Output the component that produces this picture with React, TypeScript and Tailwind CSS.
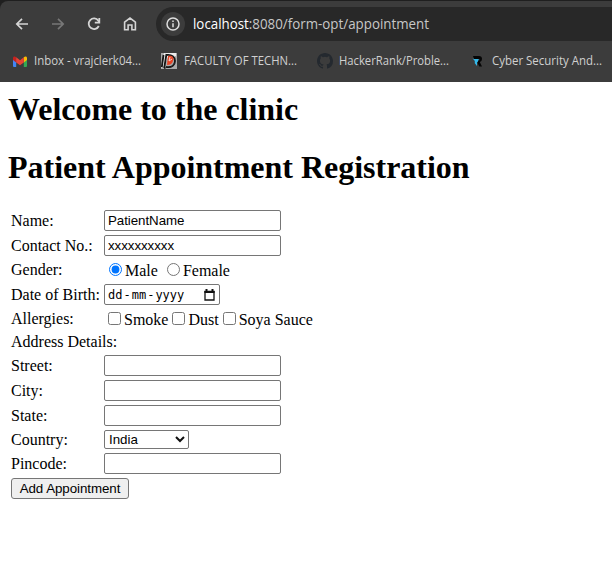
import type { ReactNode } from "react";

const inputClass =
  "block h-[21px] w-[177px] rounded-[2px] border border-[#767676] bg-white px-[3px] font-['Liberation_Sans',Arial,sans-serif] text-[13.333px] leading-[15px] tracking-[-0.06px] text-black outline-none";

function Row({ label, height, children }: { label: string; height: string; children?: ReactNode }) {
  return (
    <div className={`flex items-center ${height}`}>
      <div className="w-[93px] shrink-0 whitespace-nowrap leading-[18px]">{label}</div>
      {children}
    </div>
  );
}

function Choice({ type, label, checked }: { type: "radio" | "checkbox"; label: string; checked?: boolean }) {
  return (
    <label className="flex items-start whitespace-nowrap leading-[18px]">
      <input
        type={type}
        name={type === "radio" ? "gender" : label}
        defaultChecked={checked}
        className="mt-[2px] mr-[3px] ml-1 block size-[13px] shrink-0"
      />
      <span className="pt-px">{label}</span>
    </label>
  );
}

function Bookmark({ icon, text, left, width, gap }: { icon: ReactNode; text: string; left: string; width: number; gap: string }) {
  return (
    <div className={`flex h-[18px] items-center ${left} ${gap}`}>
      {icon}
      <svg width={width} height="18" className="block shrink-0 overflow-visible">
        <text x="0" y="13" textLength={width} lengthAdjust="spacingAndGlyphs" fill="#d0d0d0" fontSize="12">
          {text}
        </text>
      </svg>
    </div>
  );
}

function Toolbar() {
  return (
    <header className="h-[82px] overflow-hidden bg-[#1f1f1f] font-['Open_Sans','Noto_Sans',sans-serif]">
      <div className="mt-px h-[81px] rounded-tl-[8px] bg-[#3c3c3c]">
        <div className="flex h-[46px] items-center pl-[14px]">
          <svg width="16" height="16" viewBox="0 0 16 16" fill="none" stroke="#d5d5d5" strokeWidth="1.7">
            <path d="M14 8H3M8 2.8 2.8 8 8 13.2" />
          </svg>
          <svg className="ml-5" width="16" height="16" viewBox="0 0 16 16" fill="none" stroke="#777777" strokeWidth="1.7">
            <path d="M2 8h11M8 2.8 13.2 8 8 13.2" />
          </svg>
          <svg className="ml-5" width="16" height="16" viewBox="0 0 16 16" fill="none" stroke="#d5d5d5" strokeWidth="1.8">
            <path d="M12.8 10A5.3 5.3 0 1 1 12.3 4.6L13.4 6" />
            <path d="M13.3 2v4.6H8.8" />
          </svg>
          <svg className="ml-5" width="16" height="16" viewBox="0 0 16 16" fill="none" stroke="#d5d5d5" strokeWidth="1.6">
            <path d="M2.6 6.2 8 2l5.4 4.2v7.5H9.9V9H6.1v4.7H2.6Z" />
          </svg>
          <div className="ml-[18px] flex h-[34px] flex-1 items-center rounded-l-full bg-[#282828] pl-[5px]">
            <div className="flex size-6 items-center justify-center rounded-full bg-[#3c3c3c]">
              <svg width="14" height="14" viewBox="0 0 14 14" fill="none" stroke="#dedede" strokeWidth="1.5">
                <circle cx="7" cy="7" r="6" />
                <path d="M7 6.2v4M7 3.5v1.5" />
              </svg>
            </div>
            <svg width="236" height="20" className="ml-2 block overflow-visible">
              <text x="0" y="15" textLength="236" lengthAdjust="spacingAndGlyphs" fontSize="14" fill="#c7c7c7">
                <tspan fill="#ffffff">localhost</tspan>:8080/form-opt/appointment
              </text>
            </svg>
          </div>
        </div>
        <nav className="flex h-[28px] items-center">
          <Bookmark
            left="ml-[13px]"
            gap="gap-[7px]"
            width={107}
            text="Inbox - vrajclerk04..."
            icon={
              <svg width="14" height="11" viewBox="0 0 14 11" className="shrink-0">
                <path fill="#4285f4" d="M0 3h3.2v8H1a1 1 0 0 1-1-1Z" />
                <path fill="#34a853" d="M10.8 3H14v7a1 1 0 0 1-1 1h-2.2Z" />
                <path fill="#fbbc04" d="M10.8 1.2C12.3-.2 14 .3 14 2v2l-3.2 2.4Z" />
                <path fill="#c5221f" d="M0 2C0 .3 1.7-.2 3.2 1.2v5.2L0 4Z" />
                <path fill="#ea4335" d="m3.2 1.2 3.8 3 3.8-3v5.2L7 9.2 3.2 6.4Z" />
              </svg>
            }
          />
          <Bookmark
            left="ml-5"
            gap="gap-[7px]"
            width={113}
            text="FACULTY OF TECHN..."
            icon={
              <svg width="16" height="16" viewBox="0 0 16 16" className="shrink-0">
                <path fill="#aaaaaa" d="M0 0h16v16H0Z" />
                <path fill="#eeeeee" d="M3 0h12v3l-3 1-4-2-5 11-3 2Z" />
                <path stroke="#151515" strokeWidth="1.8" fill="none" d="M.8 14 2.5 2M3.2 15 5.5 1M5 14c6 1 9-2 9-6S11 1 5 2" />
                <path fill="#e54426" d="M7 3c5-1 6 2 5 5-1 3-3 4-6 4Z" />
                <path stroke="#f7d2c9" fill="none" d="m9 4-1 4 3-2" />
                <path stroke="#222222" d="m10 14 4-4M3 16l3-2" />
              </svg>
            }
          />
          <Bookmark
            left="ml-5"
            gap="gap-[6px]"
            width={110}
            text="HackerRank/Proble..."
            icon={
              <svg width="16" height="16" viewBox="0 0 16 16" fill="#24292f" className="shrink-0">
                <path d="M8 0C3.58 0 0 3.58 0 8c0 3.54 2.29 6.53 5.47 7.59.4.07.55-.17.55-.38 0-.19-.01-.82-.01-1.49-2.01.37-2.53-.49-2.69-.94-.09-.23-.48-.94-.82-1.13-.28-.15-.68-.52-.01-.53.63-.01 1.08.58 1.23.82.72 1.21 1.87.87 2.33.66.07-.52.28-.87.51-1.07-1.78-.2-3.64-.89-3.64-3.95 0-.87.31-1.59.82-2.15-.08-.2-.36-1.02.08-2.12 0 0 .67-.21 2.2.82a7.65 7.65 0 0 1 4 0c1.53-1.04 2.2-.82 2.2-.82.44 1.1.16 1.92.08 2.12.51.56.82 1.27.82 2.15 0 3.07-1.87 3.75-3.65 3.95.29.25.54.73.54 1.48 0 1.07-.01 1.93-.01 2.2 0 .21.15.46.55.38A8 8 0 0 0 16 8c0-4.42-3.58-8-8-8Z" />
              </svg>
            }
          />
          <Bookmark
            left="ml-[23px]"
            gap="gap-[9px]"
            width={110}
            text="Cyber Security And..."
            icon={
              <svg width="11" height="11" viewBox="0 0 11 11" className="shrink-0">
                <path fill="#050505" d="M1 0h6q3 0 3 3 0 2.4-2.2 3L10 10.5H7.3L5 6V4.5h1.7q1 0 1-.7t-1-.7H2Z" />
                <path fill="#35b8e8" d="M.5 2.3 2 3h4.8L5.6 6.2H5V10L2.8 7.2V5Z" />
              </svg>
            }
          />
        </nav>
      </div>
    </header>
  );
}

export default function App() {
  return (
    <div className="h-[564px] w-[612px] overflow-hidden bg-white font-['Liberation_Serif','Times_New_Roman',serif] text-[16px] text-black">
      <Toolbar />
      <main className="px-2 pt-[9px]">
        <h1 className="text-[32px] leading-[37px] font-bold tracking-[-0.02px]">Welcome to the clinic</h1>
        <h1 className="mt-[21px] text-[32px] leading-[37px] font-bold tracking-[-0.02px]">Patient Appointment Registration</h1>
        <form className="mt-[23px] flex flex-col gap-[2px] pl-[3px]">
          <Row label="Name:" height="h-[23px]">
            <input className={inputClass} defaultValue="PatientName" />
          </Row>
          <Row label="Contact No.:" height="h-[23px]">
            <input className={inputClass} defaultValue="xxxxxxxxxx" />
          </Row>
          <Row label="Gender:" height="h-[22px]">
            <div className="flex gap-[5px] pl-px">
              <Choice type="radio" label="Male" checked />
              <Choice type="radio" label="Female" />
            </div>
          </Row>
          <Row label="Date of Birth:" height="h-[23px]">
            <div className="flex h-[21px] w-[116px] items-center justify-between rounded-[2px] border border-[#767676] pr-[4px] pl-[3px]">
              <span className="flex pt-px font-['DejaVu_Sans_Mono',monospace] text-[12px] leading-[15px]">
                <span className="pr-px">dd</span>-<span className="px-px">mm</span>-<span className="pl-px">yyyy</span>
              </span>
              <svg width="11" height="12" viewBox="0 0 11 12" fill="none" stroke="#111111">
                <path d="M1 2.5h9v8.5H1Z" strokeWidth="1.3" />
                <path d="M.4 3h10.2M2.5 0v2M8.5 0v2" strokeWidth="2" />
              </svg>
            </div>
          </Row>
          <Row label="Allergies:" height="h-[22px]">
            <div className="flex">
              <Choice type="checkbox" label="Smoke" />
              <Choice type="checkbox" label="Dust" />
              <Choice type="checkbox" label="Soya Sauce" />
            </div>
          </Row>
          <Row label="Address Details:" height="h-5" />
          <Row label="Street:" height="h-[23px]">
            <input className={inputClass} />
          </Row>
          <Row label="City:" height="h-[23px]">
            <input className={inputClass} />
          </Row>
          <Row label="State:" height="h-[23px]">
            <input className={inputClass} />
          </Row>
          <Row label="Country:" height="h-[21px]">
            <div className="relative">
              <select className="block h-[19px] w-[85px] appearance-none rounded-[2px] border border-[#767676] bg-white pl-1 font-['Liberation_Sans',Arial,sans-serif] text-[13.333px] leading-[15px]">
                <option>India</option>
              </select>
              <svg className="pointer-events-none absolute top-[6px] right-[4px]" width="10" height="7" viewBox="0 0 10 7" fill="none" stroke="#111111" strokeWidth="2">
                <path d="m1 1 4 4 4-4" />
              </svg>
            </div>
          </Row>
          <Row label="Pincode:" height="h-[23px]">
            <input className={inputClass} />
          </Row>
          <div className="flex h-[23px] items-center">
            <button
              type="button"
              className="h-[21px] w-[118px] rounded-[3px] border border-[#767676] bg-[#efefef] font-['Liberation_Sans',Arial,sans-serif] text-[13.333px] leading-[15px] tracking-[-0.06px] whitespace-nowrap"
            >
              Add Appointment
            </button>
          </div>
        </form>
      </main>
    </div>
  );
}
